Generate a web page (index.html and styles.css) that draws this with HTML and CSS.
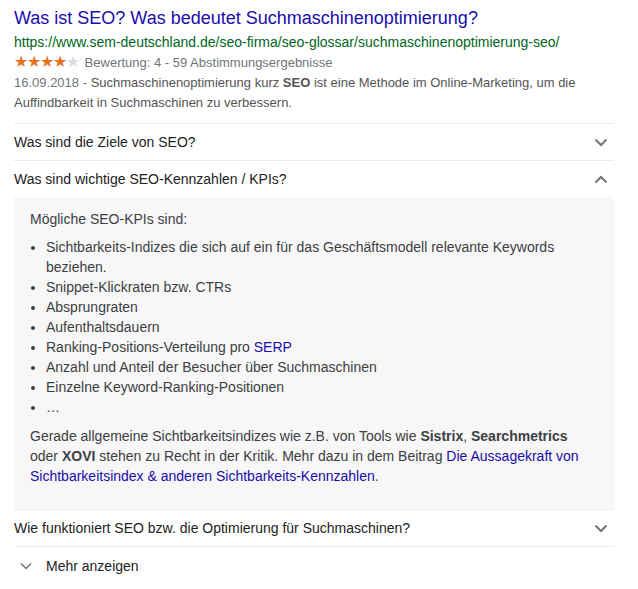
FILE: index.html
```html
<!DOCTYPE html>
<html lang="de">
<head>
    <meta charset="UTF-8">
    <title>Was ist SEO?</title>
    <link rel="stylesheet" href="styles.css">
</head>
<body>
    <div class="result">
        <h3 class="title"><a href="#">Was ist SEO? Was bedeutet Suchmaschinenoptimierung?</a></h3>
        <div class="url">https://www.sem-deutschland.de/seo-firma/seo-glossar/suchmaschinenoptimierung-seo/</div>
        <div class="rating">
            <span class="stars"><span class="on">★★★★</span><span class="off">★</span></span>
            Bewertung: 4 - 59 Abstimmungsergebnisse
        </div>
        <div class="snippet">
            <span class="date">16.09.2018 - </span>Suchmaschinenoptimierung kurz <b>SEO</b> ist eine Methode im Online-Marketing, um die Auffindbarkeit in Suchmaschinen zu verbessern.
        </div>

        <div class="faq">
            <div class="question">
                <span>Was sind die Ziele von SEO?</span>
                <svg class="chev" width="14" height="9" viewBox="0 0 14 9"><path d="M1.5 1.5 L7 7 L12.5 1.5" fill="none" stroke="#70757a" stroke-width="2"/></svg>
            </div>
            <div class="question open">
                <span>Was sind wichtige SEO-Kennzahlen / KPIs?</span>
                <svg class="chev" width="14" height="9" viewBox="0 0 14 9"><path d="M1.5 7.5 L7 2 L12.5 7.5" fill="none" stroke="#70757a" stroke-width="2"/></svg>
            </div>
            <div class="answer">
                <p class="lead">Mögliche SEO-KPIs sind:</p>
                <ul>
                    <li>Sichtbarkeits-Indizes die sich auf ein für das Geschäftsmodell relevante Keywords beziehen.</li>
                    <li>Snippet-Klickraten bzw. CTRs</li>
                    <li>Absprungraten</li>
                    <li>Aufenthaltsdauern</li>
                    <li>Ranking-Positions-Verteilung pro <a href="#">SERP</a></li>
                    <li>Anzahl und Anteil der Besucher über Suchmaschinen</li>
                    <li>Einzelne Keyword-Ranking-Positionen</li>
                    <li>…</li>
                </ul>
                <p>Gerade allgemeine Sichtbarkeitsindizes wie z.B. von Tools wie <b>Sistrix</b>, <b>Searchmetrics</b> oder <b>XOVI</b> stehen zu Recht in der Kritik. Mehr dazu in dem Beitrag <a href="#">Die Aussagekraft von Sichtbarkeitsindex &amp; anderen Sichtbarkeits-Kennzahlen</a>.</p>
            </div>
            <div class="question">
                <span>Wie funktioniert SEO bzw. die Optimierung für Suchmaschinen?</span>
                <svg class="chev" width="14" height="9" viewBox="0 0 14 9"><path d="M1.5 1.5 L7 7 L12.5 1.5" fill="none" stroke="#70757a" stroke-width="2"/></svg>
            </div>
        </div>

        <div class="more">
            <svg width="12" height="8" viewBox="0 0 12 8"><path d="M1 1.5 L6 6.5 L11 1.5" fill="none" stroke="#70757a" stroke-width="1.5"/></svg>
            <span>Mehr anzeigen</span>
        </div>
    </div>
</body>
</html>
```

FILE: styles.css
```css
body { margin: 0; background: #fff; font-family: "Liberation Sans", Arial, sans-serif; }
.result { width: 600px; margin-left: 14px; padding-top: 6px; }
.title { margin: 0; font-size: 18px; font-weight: normal; line-height: 24px; }
.title a { color: #1a0dab; text-decoration: none; }
.url { color: #006621; font-size: 14px; line-height: 16px; margin-top: 4px; }
.rating { color: #70757a; font-size: 13px; line-height: 18px; margin-top: 3px; }
.stars { font-size: 16px; letter-spacing: -1px; margin-right: 2px; }
.stars .on { color: #e7711b; }
.stars .off { color: #dadce0; }
.snippet { color: #545454; font-size: 13px; line-height: 20px; margin-top: 1px; }
.date { color: #70757a; }

.faq { margin-top: 10px; border-top: 1px solid #ebebeb; }
.question { display: flex; align-items: center; justify-content: space-between; height: 36px; border-bottom: 1px solid #ebebeb; color: #222; font-size: 14px; padding-right: 6px; }
.question.open { border-bottom: none; }
.answer { background: #f7f7f7; padding: 12px 16px 23px 16px; border-bottom: 1px solid #ebebeb; color: #3c4043; font-size: 14px; line-height: 20px; }
.answer p { margin: 0; }
.answer .lead { margin-bottom: 8px; }
.answer ul { margin: 0 0 9px 0; padding-left: 16px; }
.answer a { color: #1a0dab; text-decoration: none; }

.more { display: flex; align-items: center; gap: 14px; height: 38px; padding-left: 6px; color: #222; font-size: 14px; }
```
